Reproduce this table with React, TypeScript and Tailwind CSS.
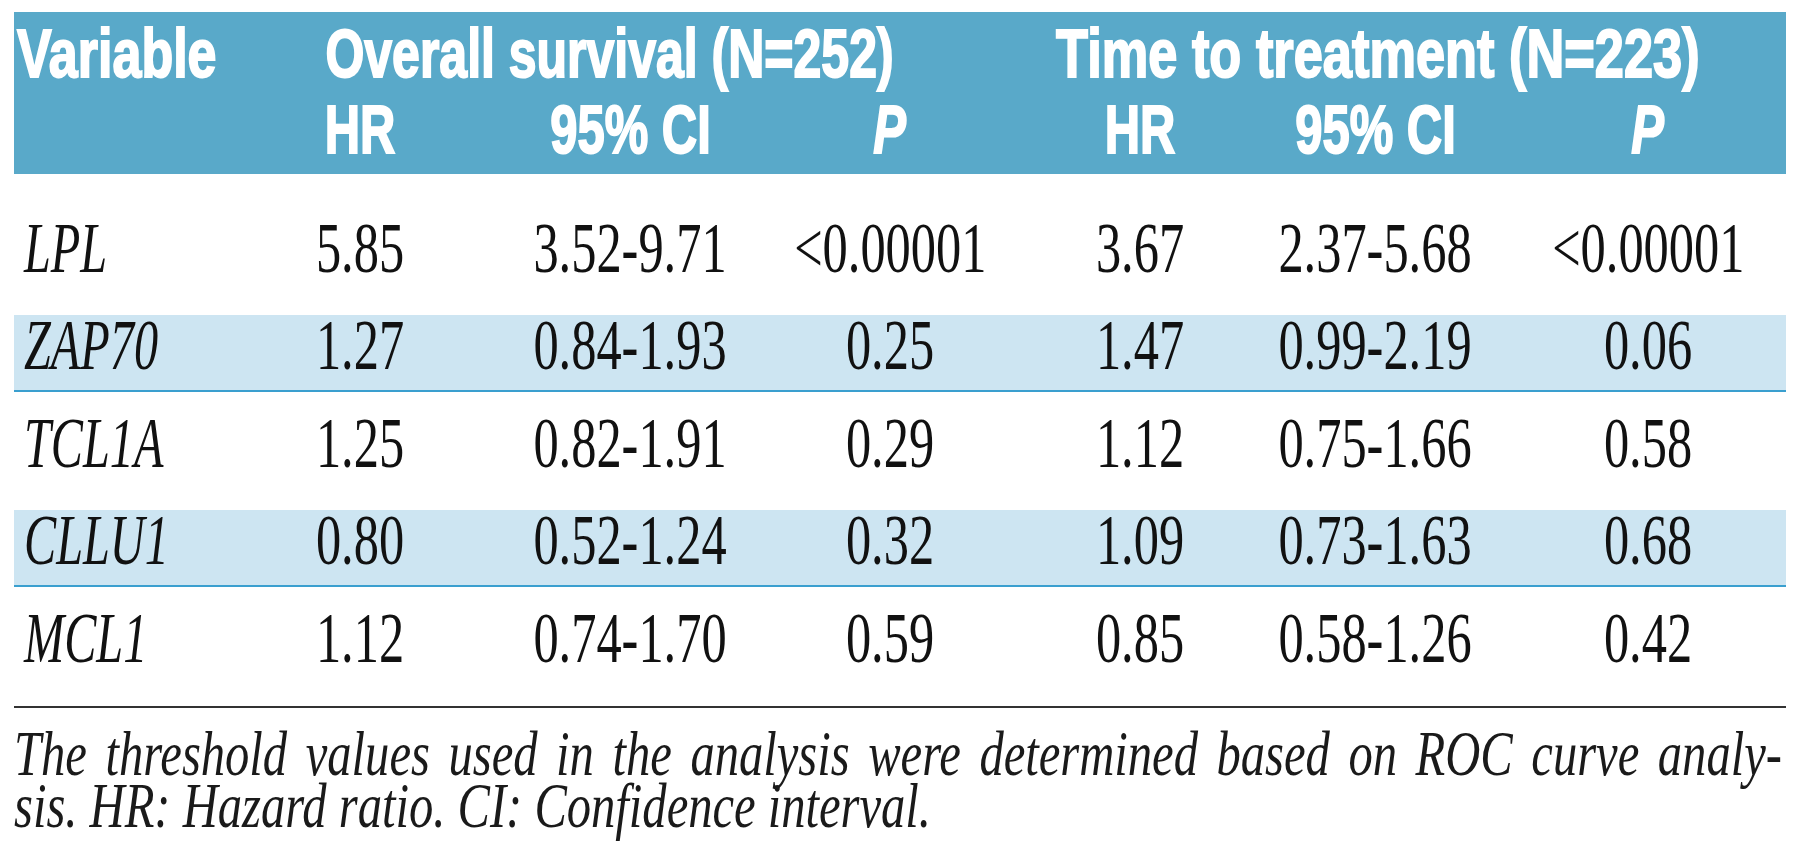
const rows = [
  {
    name: "LPL",
    values: ["5.85", "3.52-9.71", "<0.00001", "3.67", "2.37-5.68", "<0.00001"],
    cls: "h-[141px] pt-[49px]",
  },
  {
    name: "ZAP70",
    values: ["1.27", "0.84-1.93", "0.25", "1.47", "0.99-2.19", "0.06"],
    cls: "h-[77px] pt-[5px] bg-[#cde5f2] border-b-2 border-[#3a9fcf]",
  },
  {
    name: "TCL1A",
    values: ["1.25", "0.82-1.91", "0.29", "1.12", "0.75-1.66", "0.58"],
    cls: "h-[118px] pt-[26px]",
  },
  {
    name: "CLLU1",
    values: ["0.80", "0.52-1.24", "0.32", "1.09", "0.73-1.63", "0.68"],
    cls: "h-[77px] pt-[5px] bg-[#cde5f2] border-b-2 border-[#3a9fcf]",
  },
  {
    name: "MCL1",
    values: ["1.12", "0.74-1.70", "0.59", "0.85", "0.58-1.26", "0.42"],
    cls: "h-[119px] pt-[26px]",
  },
];

const cols = "grid grid-cols-[186px_320px_220px_300px_200px_270px_276px]";

function Head({ children, italic = false }: { children: React.ReactNode; italic?: boolean }) {
  return (
    <div className="flex justify-center">
      <span className={`inline-block whitespace-nowrap scale-x-[0.72] ${italic ? "italic" : ""}`}>{children}</span>
    </div>
  );
}

export default function App() {
  return (
    <div className="w-[1800px] h-[864px] overflow-hidden bg-white px-[14px] pt-[12px]">
      {/* Header band */}
      <div
        className={`${cols} bg-[#59a9c9] pt-[3px] pb-[7px] text-white font-bold text-[68px] leading-[76px] font-['Liberation_Sans',Arial,sans-serif] [-webkit-text-stroke:2px_#fff]`}
      >
        <div className="pl-[3px]">
          <span className="inline-block whitespace-nowrap origin-left scale-x-[0.765]">Variable</span>
        </div>
        <div className="col-span-3 flex justify-center pr-[20px]">
          <span className="inline-block whitespace-nowrap scale-x-[0.735]">Overall survival (N=252)</span>
        </div>
        <div className="col-span-3 flex justify-center pr-[70px]">
          <span className="inline-block whitespace-nowrap scale-x-[0.77]">Time to treatment (N=223)</span>
        </div>
        <div />
        <Head>HR</Head>
        <Head>95% CI</Head>
        <Head italic>P</Head>
        <Head>HR</Head>
        <Head>95% CI</Head>
        <Head italic>P</Head>
      </div>

      {/* Body */}
      <div className="text-[#111] text-[72px] leading-[50px] font-['Liberation_Serif','Times_New_Roman',serif]">
        {rows.map((r) => (
          <div key={r.name} className={`${cols} items-start ${r.cls}`}>
            <div className="pl-[10px]">
              <span className="inline-block italic whitespace-nowrap origin-left scale-x-[0.67]">{r.name}</span>
            </div>
            {r.values.map((v, i) => (
              <div key={i} className="flex justify-center">
                <span className="inline-block whitespace-nowrap scale-x-[0.7]">{v}</span>
              </div>
            ))}
          </div>
        ))}
      </div>

      {/* Footnote */}
      <div className="border-t-2 border-[#333] pt-[20px] text-[#1a1a1a] italic text-[63px] leading-[52px] font-['Liberation_Serif','Times_New_Roman',serif]">
        <div className="h-[52px]">
          <div className="w-[2293px] origin-left scale-x-[0.771] text-justify [text-align-last:justify] whitespace-nowrap">
            The threshold values used in the analysis were determined based on ROC curve analy-
          </div>
        </div>
        <div className="h-[52px]">
          <div className="w-[2293px] origin-left scale-x-[0.771] whitespace-nowrap">
            sis. HR: Hazard ratio. CI: Confidence interval.
          </div>
        </div>
      </div>
    </div>
  );
}
